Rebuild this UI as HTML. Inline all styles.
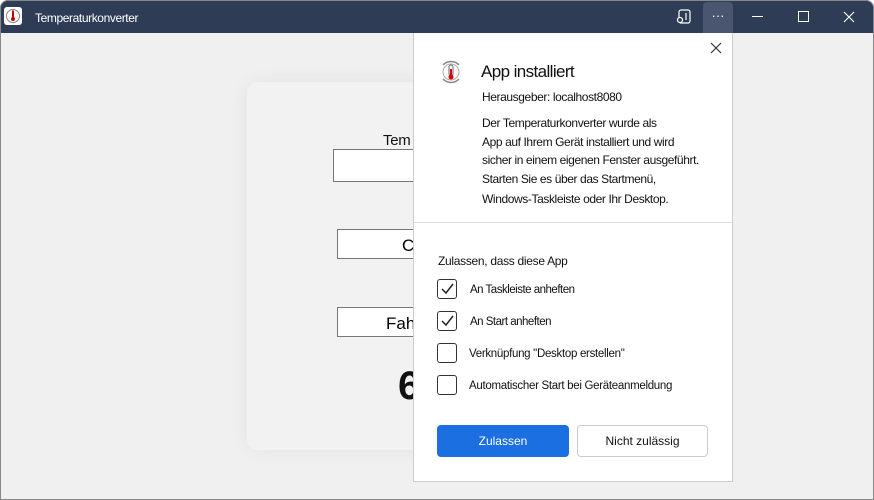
<!DOCTYPE html>
<html><head><meta charset="utf-8"><style>
*{margin:0;padding:0;box-sizing:border-box}
body{width:874px;height:500px;background:#fff;font-family:"Liberation Sans",sans-serif;position:relative;overflow:hidden}
.win{position:absolute;left:0;top:0;width:874px;height:500px;border-radius:8px 8px 0 0;overflow:hidden;background:#f0f0f0}
.frame{position:absolute;left:0;top:0;width:874px;height:500px;border-radius:8px 8px 0 0;border:1px solid #888;pointer-events:none;z-index:10}
.tb{position:absolute;left:0;top:0;width:874px;height:33px;background:#2e3c55;color:#fff}
.abs{position:absolute}
.card{position:absolute;left:247px;top:82px;width:240px;height:368px;background:#f2f2f2;border-radius:10px;box-shadow:0 0 20px rgba(0,0,0,0.06)}
.inp{position:absolute;background:#fff;border:1px solid #777}
.pop{position:absolute;left:413px;top:33px;width:320px;height:449px;background:#fff;border:1px solid #ccc;border-top:none}
.t{position:absolute;font-size:12px;color:#111;white-space:nowrap;letter-spacing:-0.3px}
.cb{position:absolute;left:437px;width:20px;height:20px;border:1px solid #333;border-radius:3px}
</style></head><body>
<div class="win">
<div class="tb">
 <svg class="abs" style="left:4px;top:7px" width="18" height="18"><rect width="18" height="18" rx="3" fill="#fff"/><circle cx="9" cy="9" r="6.5" fill="none" stroke="#888" stroke-width="1"/><rect x="8" y="3.5" width="2" height="8" fill="#c00"/><circle cx="9" cy="12" r="2" fill="#c00"/></svg>
 <div class="abs" style="left:35px;top:11px;font-size:12px;letter-spacing:-0.4px">Temperaturkonverter</div>
 <svg class="abs" style="left:674px;top:8px" width="20" height="18"><rect x="5" y="2" width="11" height="13" rx="2" fill="none" stroke="#fff" stroke-width="1.2"/><circle cx="6" cy="12" r="2.5" fill="#2e3c55" stroke="#fff" stroke-width="1.2"/><line x1="12" y1="5" x2="12" y2="12" stroke="#fff" stroke-width="1.2"/></svg>
 <div class="abs" style="left:703px;top:2px;width:30px;height:31px;background:#4a5670;border-radius:4px 4px 0 0;text-align:center;font-size:13px;line-height:28px">···</div>
 <div class="abs" style="left:752px;top:16px;width:11px;height:1px;background:#fff"></div>
 <div class="abs" style="left:798px;top:11px;width:11px;height:11px;border:1px solid #fff"></div>
 <svg class="abs" style="left:843px;top:11px" width="12" height="12"><path d="M1 1L11 11M11 1L1 11" stroke="#fff" stroke-width="1.2"/></svg>
</div>
<div class="card">
 <div class="t" style="left:136px;top:50px;font-size:15px">Tem</div>
 <div class="inp" style="left:86px;top:67px;width:120px;height:33px"></div>
 <div class="inp" style="left:90px;top:147px;width:120px;height:30px;font-size:17px;padding:6px 0 0 64px">C</div>
 <div class="inp" style="left:90px;top:225px;width:120px;height:30px;font-size:17px;padding:6px 0 0 48px">Fahd</div>
 <div class="t" style="left:151px;top:282px;font-size:40px;font-weight:bold">6</div>
</div>
<div class="pop">
 <svg class="abs" style="left:296px;top:9px" width="12" height="12"><path d="M1 1L11 11M11 1L1 11" stroke="#333" stroke-width="1.2"/></svg>
 <svg class="abs" style="left:24px;top:26px" width="26" height="26"><path d="M5 6A11 11 0 0 1 21 6M21 20A11 11 0 0 1 5 20" fill="none" stroke="#888" stroke-width="1.5"/><circle cx="13" cy="13" r="8" fill="none" stroke="#aaa" stroke-width="1"/><rect x="11" y="6" width="4" height="11" rx="2" fill="#fff" stroke="#666"/><rect x="12" y="10" width="2" height="7" fill="#d00"/><circle cx="13" cy="18" r="2.5" fill="#d00"/></svg>
 <div class="t" style="left:67px;top:29px;font-size:17px;letter-spacing:-0.6px">App installiert</div>
 <div class="t" style="left:68px;top:57px;letter-spacing:-0.4px">Herausgeber: localhost8080</div>
 <div class="t" style="left:68px;top:81px;line-height:18.5px;letter-spacing:-0.4px">Der Temperaturkonverter wurde als<br>App auf Ihrem Gerät installiert und wird<br>sicher in einem eigenen Fenster ausgeführt.<br>Starten Sie es über das Startmenü,<br><span style="line-height:22px">Windows-Taskleiste oder Ihr Desktop.</span></div>
 <div class="abs" style="left:0;top:189px;width:320px;height:1px;background:#ddd"></div>
 <div class="t" style="left:24px;top:221px">Zulassen, dass diese App</div>
</div>
<div class="cb" style="top:279px"><svg width="18" height="18"><path d="M4 9L8 13L15 4" fill="none" stroke="#222" stroke-width="1.5"/></svg></div>
<div class="t" style="left:470px;top:284px;font-size:11.5px;letter-spacing:-0.5px">An Taskleiste anheften</div>
<div class="cb" style="top:311px"><svg width="18" height="18"><path d="M4 9L8 13L15 4" fill="none" stroke="#222" stroke-width="1.5"/></svg></div>
<div class="t" style="left:470px;top:316px;font-size:11.5px;letter-spacing:-0.5px">An Start anheften</div>
<div class="cb" style="top:343px"></div>
<div class="t" style="left:469px;top:348px;font-size:11.5px">Verknüpfung "Desktop erstellen"</div>
<div class="cb" style="top:375px"></div>
<div class="t" style="left:469px;top:380px;font-size:11.5px">Automatischer Start bei Geräteanmeldung</div>
<div class="abs" style="left:437px;top:425px;width:132px;height:32px;background:#1b6fe0;border-radius:4px;color:#fff;font-size:12px;text-align:center;line-height:32px">Zulassen</div>
<div class="abs" style="left:577px;top:425px;width:131px;height:32px;border:1px solid #ccc;border-radius:4px;color:#111;font-size:12px;text-align:center;line-height:30px">Nicht zulässig</div>
</div>
<div class="frame"></div>
</body></html>
